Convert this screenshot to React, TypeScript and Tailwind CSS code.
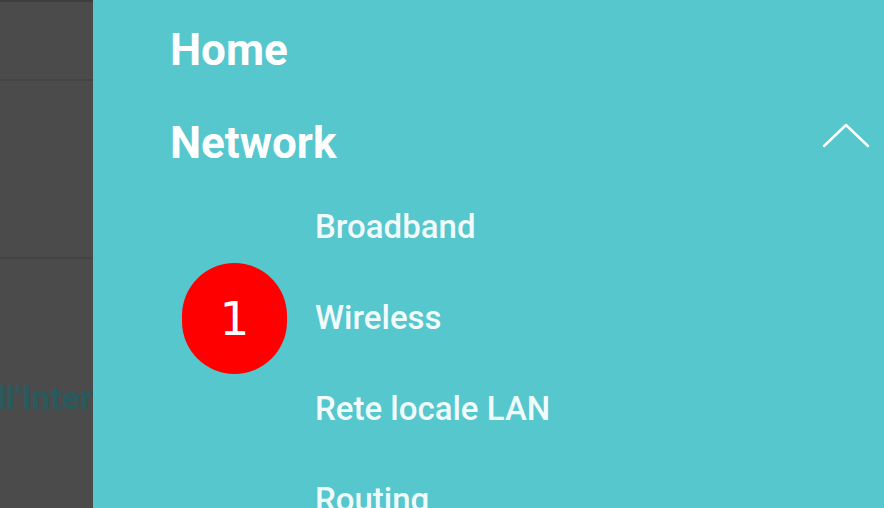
export default function App() {
  const subItems = ['Broadband', 'Wireless', 'Rete locale LAN', 'Routing']

  return (
    <div className="relative flex h-[508px] w-[884px] overflow-hidden" style={{ fontFamily: 'Roboto, "Noto Sans", sans-serif' }}>
      {/* dimmed page behind the drawer */}
      <div className="flex w-[93px] shrink-0 flex-col overflow-hidden border-t-2 border-[#3f3f3f] bg-[#4b4b4b]">
        <div className="h-[79px] border-b-2 border-[#444444]" />
        <div className="h-[178px] border-b-2 border-[#444444]" />
        <div
          className="mt-[117px] -ml-[19px] whitespace-nowrap text-[33px] leading-[40px] font-black text-[#285a5e]"
          style={{ fontFamily: 'Lato, sans-serif' }}
        >
          all'Internet
        </div>
      </div>

      {/* drawer menu */}
      <div className="flex-1 bg-[#55c7cd] pl-[77px] pt-[7px] text-white">
        <div className="h-[86px] text-[44px] leading-[86px] font-bold">Home</div>
        <div className="mt-[7px] flex h-[86px] justify-between">
          <span className="text-[44px] leading-[86px] font-bold">Network</span>
          <svg className="mt-[23px] mr-[14px]" width="48" height="25" viewBox="0 0 48 25" fill="none">
            <path d="M2 23 L24 2 L46 23" stroke="white" strokeWidth="2.5" strokeLinecap="round" strokeLinejoin="round" />
          </svg>
        </div>
        <div className="flex flex-col gap-[9px] pl-[145px]">
          {subItems.map(item => (
            <div key={item} className="h-[82px] whitespace-nowrap text-[33px] leading-[82px] font-medium text-[#f2fbfb]">
              {item}
            </div>
          ))}
        </div>
      </div>

      {/* step marker */}
      <div className="absolute left-[182px] top-[263px] flex h-[111px] w-[105px] items-center justify-center rounded-full bg-[#ff0000]">
        <span className="text-[47px] leading-none text-white" style={{ fontFamily: '"DejaVu Sans", sans-serif' }}>1</span>
      </div>
    </div>
  )
}
